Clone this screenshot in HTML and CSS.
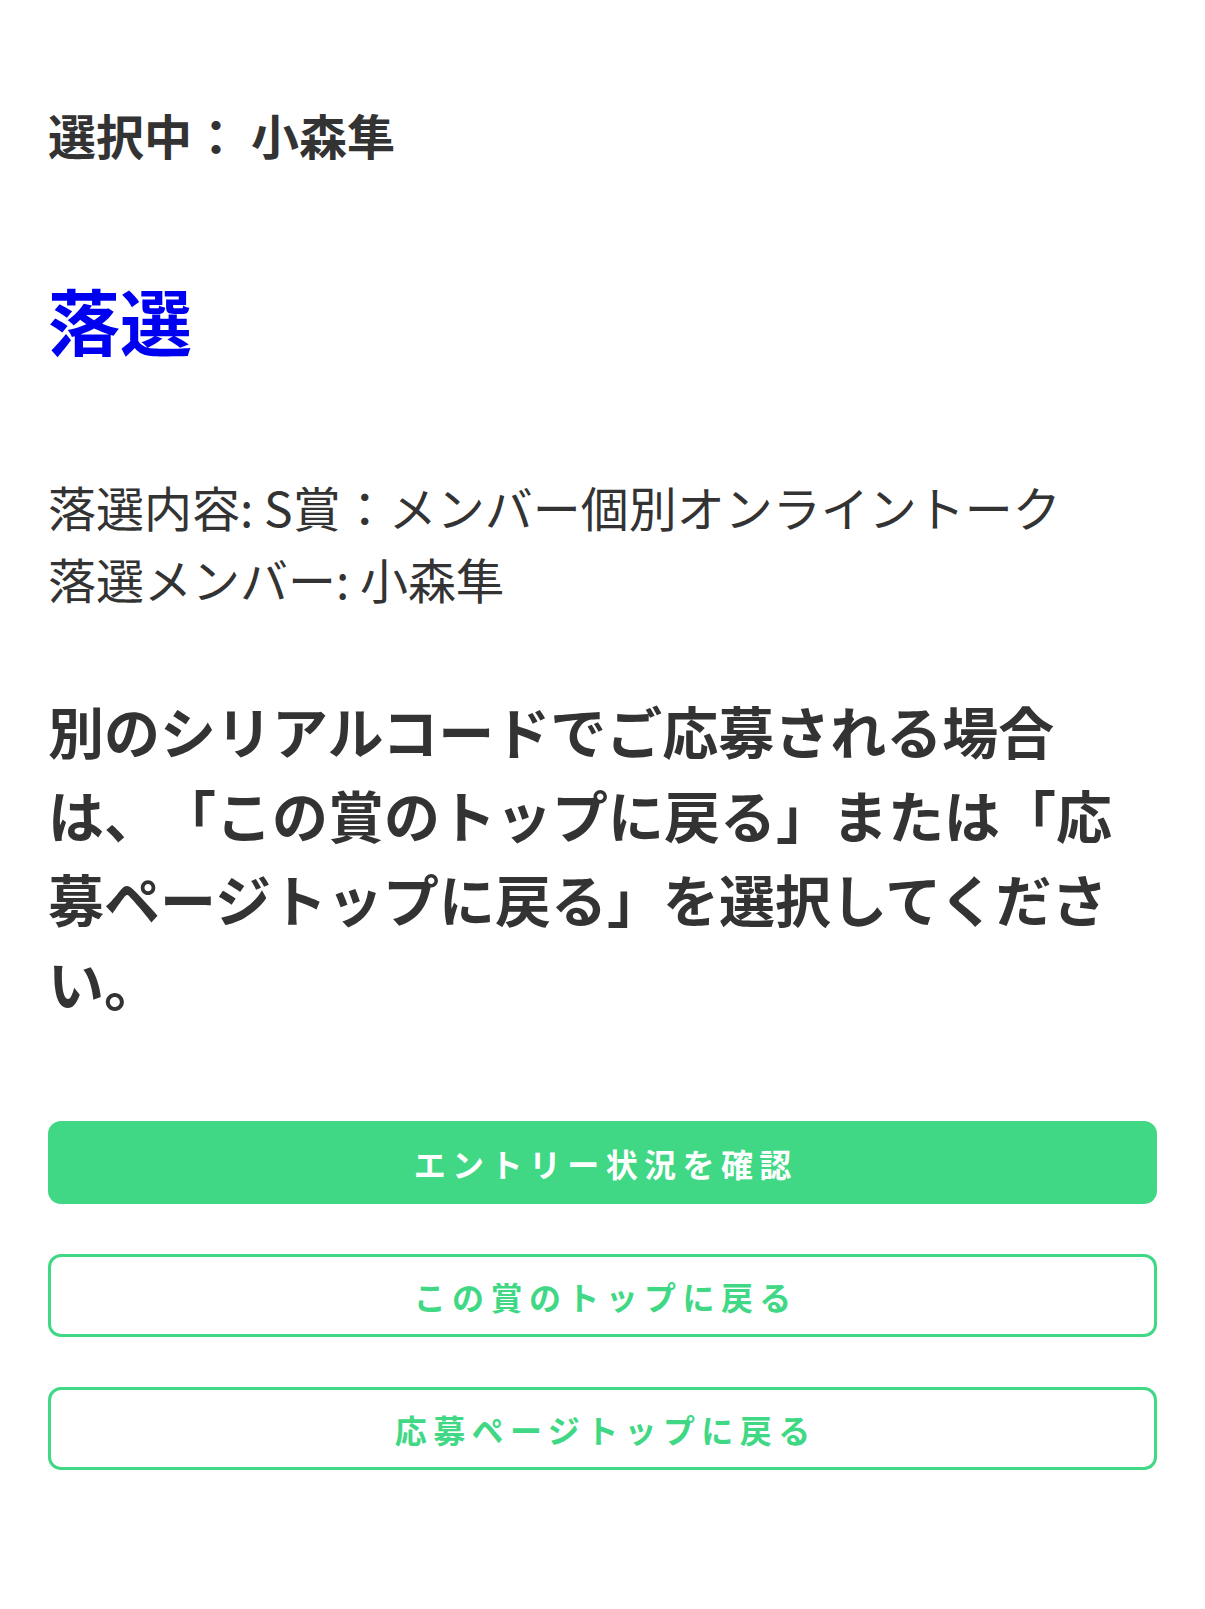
FILE: index.html
```html
<!DOCTYPE html>
<html lang="ja">
<head>
<meta charset="utf-8">
<title>落選</title>
<link rel="stylesheet" href="styles.css">
</head>
<body>
<main class="page">
  <h2 class="selected">選択中： 小森隼</h2>
  <h1 class="result">落選</h1>
  <div class="details">
    <p>落選内容: S賞：メンバー個別オンライントーク</p>
    <p>落選メンバー: 小森隼</p>
  </div>
  <p class="notice">別のシリアルコードでご応募される場合は、「この賞のトップに戻る」または「応募ページトップに戻る」を選択してください。</p>
  <div class="actions">
    <a class="btn btn-primary" href="#">エントリー状況を確認</a>
    <a class="btn btn-outline" href="#">この賞のトップに戻る</a>
    <a class="btn btn-outline" href="#">応募ページトップに戻る</a>
  </div>
</main>
</body>
</html>
```

FILE: styles.css
```css
html, body {
  margin: 0;
  padding: 0;
  background: #ffffff;
}

body {
  font-family: "Noto Sans CJK JP", "Noto Sans", sans-serif;
  color: #333333;
  text-spacing-trim: space-all;
}

.page {
  padding: 98px 48px 120px;
}

.selected {
  margin: 0;
  font-size: 48px;
  line-height: 72px;
  font-weight: 700;
  color: #333333;
}

.result {
  margin: 95px 0 0;
  font-size: 72px;
  line-height: 108px;
  font-weight: 700;
  color: #0000f0;
}

.details {
  margin-top: 97px;
}

.details p {
  margin: 0;
  font-size: 48px;
  line-height: 72px;
  font-weight: 400;
}

.notice {
  margin: 74px 0 0;
  font-size: 56px;
  line-height: 84px;
  font-weight: 700;
  text-spacing-trim: space-all;
}

.actions {
  margin-top: 97px;
  display: flex;
  flex-direction: column;
  gap: 50px;
}

.btn {
  display: flex;
  align-items: center;
  justify-content: center;
  box-sizing: border-box;
  height: 83px;
  border-radius: 13px;
  font-size: 32px;
  font-weight: 700;
  letter-spacing: 0.2em;
  text-indent: 0.2em;
  text-decoration: none;
}

.btn-primary {
  background: #40d884;
  color: #ffffff;
  border: 3px solid #40d884;
}

.btn-outline {
  background: #ffffff;
  color: #40d884;
  border: 3px solid #40d884;
}
```
